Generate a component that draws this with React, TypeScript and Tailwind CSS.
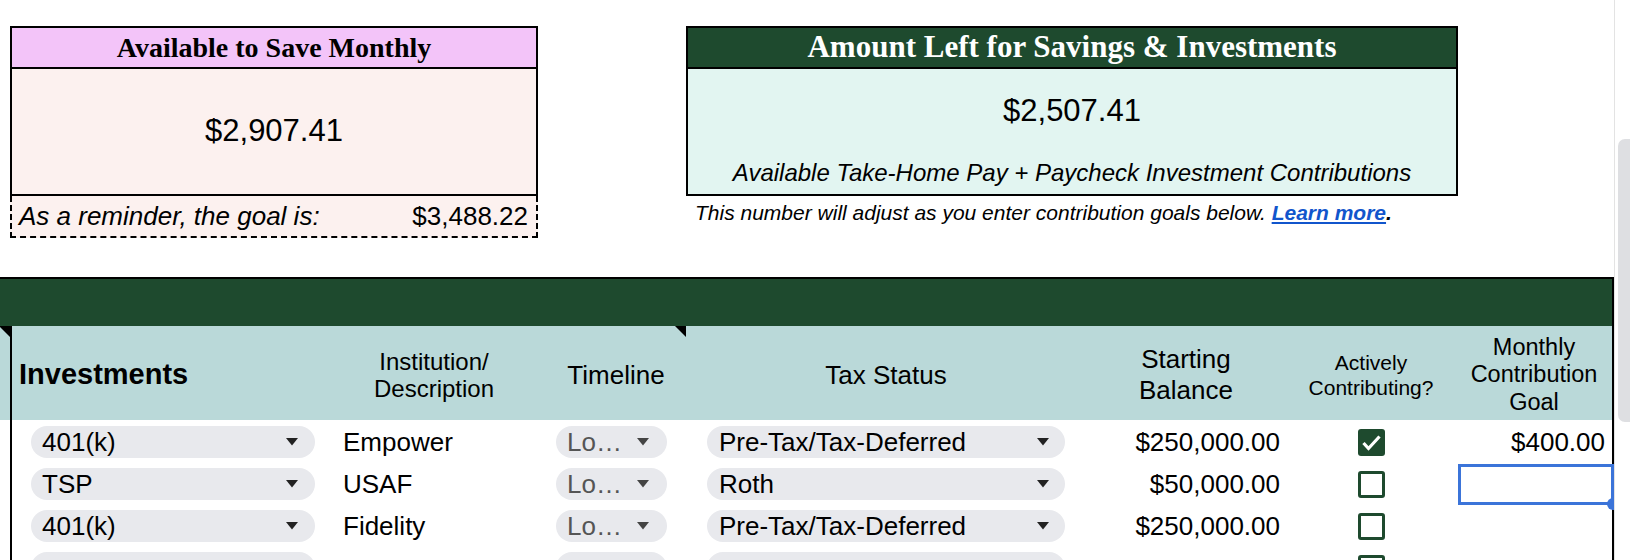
const GREEN = "bg-[#1e4a2e]";

function Arrow({ color = "#222" }: { color?: string }) {
  return (
    <svg width="12" height="8" viewBox="0 0 12 8" className="shrink-0">
      <path d="M0 0h12L6 7.5z" fill={color} />
    </svg>
  );
}

function Corner() {
  // note indicator in the top-right of a cell
  return (
    <svg width="11" height="11" viewBox="0 0 11 11" className="absolute right-0 top-0">
      <path d="M0 0h11v11z" fill="#000" />
    </svg>
  );
}

function CheckBox({ on }: { on?: boolean }) {
  if (on) {
    return (
      <div className="flex h-[27px] w-[27px] items-center justify-center rounded-[3px] bg-[#1e4a2e]">
        <svg width="21" height="17" viewBox="0 0 21 17">
          <path d="M2.5 9l5 5.5L18.5 2.5" fill="none" stroke="#fff" strokeWidth="3.2" />
        </svg>
      </div>
    );
  }
  return <div className="h-[27px] w-[27px] rounded-[3px] border-[3px] border-[#1e4a2e] bg-white" />;
}

type Row = {
  type: string;
  inst: string;
  tax: string;
  bal: string;
  on?: boolean;
  goal?: string;
  sel?: boolean;
};

const rows: Row[] = [
  { type: "401(k)", inst: "Empower", tax: "Pre-Tax/Tax-Deferred", bal: "$250,000.00", on: true, goal: "$400.00" },
  { type: "TSP", inst: "USAF", tax: "Roth", bal: "$50,000.00", sel: true },
  { type: "401(k)", inst: "Fidelity", tax: "Pre-Tax/Tax-Deferred", bal: "$250,000.00" },
  { type: "", inst: "", tax: "", bal: "" },
];

function DataRow({ r, blank }: { r: Row; blank?: boolean }) {
  return (
    <div className="flex h-[42px] shrink-0 bg-white text-[26px]">
      <div className="w-[10px]" />
      <div className="flex w-[312px] items-center border-l-2 border-black pt-[2px]">
        <div className="ml-[19px] flex h-[32px] w-[284px] items-center justify-between rounded-full bg-[#e8e9ed] pl-[11px] pr-[17px]">
          <span>{r.type}</span>
          <Arrow />
        </div>
      </div>
      <div className="flex w-[224px] items-center pl-[21px] pt-[2px]">{r.inst}</div>
      <div className="flex w-[140px] items-center pt-[2px]">
        <div className="ml-[10px] flex h-[32px] w-[111px] items-center justify-between rounded-full bg-[#e8e9ed] pl-[11px] pr-[18px] text-[#555]">
          <span>{blank ? "" : "Lo…"}</span>
          <Arrow color="#444" />
        </div>
      </div>
      <div className="flex w-[400px] items-center pt-[2px]">
        <div className="ml-[21px] flex h-[32px] w-[358px] items-center justify-between rounded-full bg-[#e8e9ed] pl-[12px] pr-[16px]">
          <span>{r.tax}</span>
          <Arrow />
        </div>
      </div>
      <div className="flex w-[200px] items-center justify-end pr-[6px] pt-[2px]">{r.bal}</div>
      <div className="flex w-[170px] items-center justify-center pt-[2px]">
        <CheckBox on={r.on} />
      </div>
      <div className="relative flex w-[156px] items-center justify-end pr-[7px] pt-[2px]">
        {r.goal}
        {r.sel && (
          <div className="absolute bottom-[-1px] left-[2px] right-[-2px] top-[2px] border-[3px] border-[#3b74d9]">
            <div className="absolute bottom-[-8px] right-[-8px] h-[12px] w-[12px] rounded-full bg-[#3b74d9]" />
          </div>
        )}
      </div>
    </div>
  );
}

export default function App() {
  return (
    <div className="flex h-[560px] w-[1630px] overflow-hidden bg-white font-['Liberation_Sans',Arial,sans-serif] text-black">
      <div className="flex w-[1614px] shrink-0 flex-col overflow-hidden">
        {/* summary boxes */}
        <div className="flex h-[277px] shrink-0 items-start pl-[10px] pt-[26px]">
          <div className="w-[528px]">
            <div className="border-2 border-black bg-[#fcf1ef]">
              <div className="flex h-[41px] items-center justify-center border-b-2 border-black bg-[#f3c4f9] font-['Liberation_Serif',Georgia,serif] text-[28px] font-bold">
                Available to Save Monthly
              </div>
              <div className="flex h-[125px] items-center justify-center text-[31px]">$2,907.41</div>
            </div>
            <div className="flex h-[42px] items-center justify-between border-2 border-t-0 border-dashed border-black bg-[#fcf1ef] pl-[7px] pr-[8px] text-[26px]">
              <span className="italic">As a reminder, the goal is:</span>
              <span>$3,488.22</span>
            </div>
          </div>

          <div className="ml-[148px] w-[772px]">
            <div className="border-2 border-black">
              <div className={`flex h-[41px] items-center justify-center border-b-2 border-black ${GREEN} font-['Liberation_Serif',Georgia,serif] text-[31px] font-bold text-white`}>
                Amount Left for Savings &amp; Investments
              </div>
              <div className="flex h-[125px] flex-col items-center bg-[#e2f5f1] pt-[24px]">
                <div className="text-[31px] leading-[36px]">$2,507.41</div>
                <div className="mt-[30px] text-[24px] italic leading-[28px]">
                  Available Take-Home Pay + Paycheck Investment Contributions
                </div>
              </div>
            </div>
            <div className="mt-[4px] whitespace-nowrap pl-[9px] text-[21px] italic leading-[26px]">
              This number will adjust as you enter contribution goals below.{" "}
              <span className="font-bold text-[#1155cc] underline">Learn more</span>
              <span className="font-bold">.</span>
            </div>
          </div>
        </div>

        {/* investments table */}
        <div className="flex flex-col border-r-2 border-t-2 border-black">
          <div className={`h-[47px] shrink-0 ${GREEN}`} />
          <div className="flex h-[94px] shrink-0 bg-[#bad9d9] text-center">
            <div className="relative w-[10px]">
              <Corner />
            </div>
            <div className="flex w-[312px] items-center border-l-2 border-black pl-[7px] pt-[4px] text-[29px] font-bold">
              Investments
            </div>
            <div className="flex w-[224px] items-center justify-center pt-[4px] text-[24px] leading-[27px]">
              Institution/
              <br />
              Description
            </div>
            <div className="relative flex w-[140px] items-center justify-center pt-[4px] text-[26px]">
              Timeline
              <Corner />
            </div>
            <div className="flex w-[400px] items-center justify-center pt-[4px] text-[26px]">Tax Status</div>
            <div className="flex w-[200px] items-center justify-center pt-[4px] text-[26px] leading-[31px]">
              Starting
              <br />
              Balance
            </div>
            <div className="flex w-[170px] items-center justify-center pt-[4px] text-[21px] leading-[25px]">
              Actively
              <br />
              Contributing?
            </div>
            <div className="flex w-[156px] items-center justify-center pt-[4px] text-[23.5px] leading-[27.5px]">
              Monthly
              <br />
              Contribution
              <br />
              Goal
            </div>
          </div>
          {rows.map((r, i) => (
            <DataRow key={i} r={r} blank={i === 3} />
          ))}
        </div>
      </div>

      {/* scrollbar */}
      <div className="w-[16px] shrink-0 border-l border-[#e3e3e3] pl-[3px] pt-[139px]">
        <div className="h-[283px] w-[20px] rounded-[7px] bg-[#dedfe2]" />
      </div>
    </div>
  );
}
